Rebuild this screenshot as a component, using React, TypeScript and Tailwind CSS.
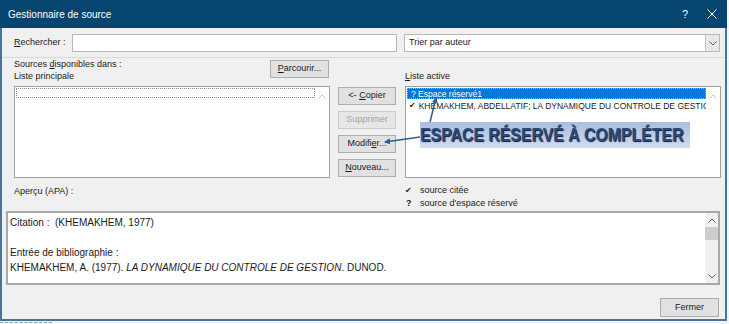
import React from 'react';

const ChevUp = ({ color = '#b0b0b0' }: { color?: string }) => (
  <svg width="8" height="5" viewBox="0 0 8 5"><path d="M0.5 4.5 L4 1 L7.5 4.5" fill="none" stroke={color} strokeWidth="1" /></svg>
);

const ChevDown = ({ color = '#606060' }: { color?: string }) => (
  <svg width="8" height="5" viewBox="0 0 8 5"><path d="M0.5 0.5 L4 4 L7.5 0.5" fill="none" stroke={color} strokeWidth="1" /></svg>
);

const Btn = ({ children, disabled = false, className = '' }: { children: React.ReactNode; disabled?: boolean; className?: string }) => (
  <div
    className={`h-[18px] flex items-center justify-center border text-[9px] ${
      disabled ? 'bg-[#e6e6e6] border-[#cccccc] text-[#a3a3a3]' : 'bg-[#e1e1e1] border-[#adadad] text-[#1a1a1a]'
    } ${className}`}
  >
    {children}
  </div>
);

const App = () => {
  return (
    <div className="relative w-[729px] h-[324px] bg-[#f6f5ee] overflow-hidden font-['Liberation_Sans',Arial,sans-serif] text-[#1a1a1a]">
      <div className="w-[727px] h-[321px] flex flex-col">
        {/* title bar */}
        <div className="h-[28px] bg-[#05456f] flex items-center pl-[8px] text-white">
          <span className="text-[10px]">Gestionnaire de source</span>
          <span className="ml-auto text-[11px] mr-[19px]">?</span>
          <svg width="10" height="10" viewBox="0 0 10 10" className="mr-[10px]">
            <path d="M0.5 0.5 L9.5 9.5 M9.5 0.5 L0.5 9.5" stroke="white" strokeWidth="1" />
          </svg>
        </div>

        <div className="flex-1 flex flex-col bg-[#f0f0f0] border-x-2 border-b-2 border-[#46759f]">
          {/* search row */}
          <div className="mt-[6px] h-[18px] flex items-center pl-[12px]">
            <span className="w-[58px] text-[9px]"><u>R</u>echercher :</span>
            <div className="w-[325px] h-[18px] bg-white border border-[#b9b9b9]" />
            <div className="ml-[7px] w-[316px] h-[18px] bg-white border border-[#b9b9b9] flex items-center">
              <span className="pl-[4px] text-[9px]">Trier par auteur</span>
              <div className="ml-auto w-[14px] h-[16px] bg-[#e8e8e8] border-l border-[#c4c4c4] flex items-center justify-center">
                <ChevDown />
              </div>
            </div>
          </div>

          <div className="mt-[5px] h-px bg-[#dadada]" />

          {/* lists */}
          <div className="flex pl-[12px]">
            <div className="w-[316px] flex flex-col">
              <div className="h-[28px] flex justify-between">
                <div className="text-[9px] leading-[12px]">
                  <div>Sources <u>d</u>isponibles dans :</div>
                  <div>Liste principale</div>
                </div>
                <Btn className="mt-[2px] mr-px w-[59px]"><span><u>P</u>arcourir...</span></Btn>
              </div>
              <div className="h-[92px] bg-white border border-[#a0a0a0] flex">
                <div className="flex-1 pl-px pt-px">
                  <div className="h-[10px] border border-dotted border-[#8a8a8a]" />
                </div>
                <div className="w-[14px] flex justify-center pt-[7px]">
                  <ChevUp color="#c8c8c8" />
                </div>
              </div>
            </div>

            <div className="ml-[8px] w-[58px] pt-[29px] flex flex-col gap-[6px]">
              <Btn><span>&lt;- <u>C</u>opier</span></Btn>
              <Btn disabled>Supprimer</Btn>
              <Btn><span>Modifi<u>e</u>r...</span></Btn>
              <Btn><span><u>N</u>ouveau...</span></Btn>
            </div>

            <div className="ml-[9px] w-[316px] flex flex-col">
              <div className="h-[28px] pt-[12px] text-[9px] leading-[12px]"><u>L</u>iste active</div>
              <div className="h-[92px] bg-white border border-[#a0a0a0] flex">
                <div className="flex-1 pl-px pt-px overflow-hidden text-[8.5px] leading-[10px]">
                  <div className="h-[11px] bg-[#0078d7] text-white pl-[3px] whitespace-nowrap border border-dotted border-[#d9a36a]">? Espace réservé1</div>
                  <div className="h-[13px] flex items-center pl-[2px] whitespace-nowrap">
                    <span className="mr-[3px] font-['DejaVu_Sans',sans-serif] text-[8px]">✔</span>
                    KHEMAKHEM, ABDELLATIF; LA DYNAMIQUE DU CONTROLE DE GESTION
                  </div>
                </div>
                <div className="w-[14px] flex justify-center pt-[7px]">
                  <ChevUp color="#c8c8c8" />
                </div>
              </div>
            </div>
          </div>

          {/* legend row */}
          <div className="h-[33px] flex pl-[12px] text-[9px]">
            <div className="w-[391px] pt-[7px] leading-[12px]">Aperçu (APA) :</div>
            <div className="pt-[6px] leading-[13px]">
              <div className="flex">
                <span className="w-[15px] font-['DejaVu_Sans',sans-serif] text-[8px]">✔</span>
                <span>source citée</span>
              </div>
              <div className="flex">
                <span className="w-[15px] font-bold pl-px">?</span>
                <span>source d'espace réservé</span>
              </div>
            </div>
          </div>

          {/* preview */}
          <div className="ml-[4px] w-[714px] h-[74px] bg-white border-2 border-[#a9a9a9] flex">
            <div className="flex-1 pl-[2px] pt-[2px] text-[10px] leading-[15px]">
              <div>Citation :&nbsp; (KHEMAKHEM, 1977)</div>
              <div>&nbsp;</div>
              <div>Entrée de bibliographie :</div>
              <div>
                KHEMAKHEM, A. (1977). <i>LA DYNAMIQUE DU CONTROLE DE GESTION</i>. DUNOD.
              </div>
            </div>
            <div className="w-[13px] bg-[#f0f0f0] flex flex-col items-center">
              <div className="pt-[5px]"><ChevUp color="#606060" /></div>
              <div className="mt-[4px] w-[13px] h-[13px] bg-[#cdcdcd]" />
              <div className="mt-auto pb-[4px]"><ChevDown /></div>
            </div>
          </div>

          <div className="mt-[13px] self-end mr-[6px]">
            <Btn className="w-[59px] h-[19px]">Fermer</Btn>
          </div>
        </div>
      </div>

      {/* bottom strip */}
      <div className="ml-0 mt-px w-[52px] border-t border-dashed border-[#9a9a9a]" />

      {/* annotation overlay */}
      <div className="absolute left-[420px] top-[122px] w-[270px] h-[26px] bg-linear-to-b from-[#a8bee3] to-[#d0dcf0] flex items-center">
        <span className="block origin-left scale-x-[0.88] whitespace-nowrap text-[18px] font-bold leading-none text-[#2b4b7b] [text-shadow:1px_1px_1px_#0c1d38]">
          ESPACE RÉSERVÉ À COMPLÉTER
        </span>
      </div>
      <svg className="absolute left-0 top-0 pointer-events-none" width="729" height="324">
        <defs>
          <marker id="ah" markerWidth="6" markerHeight="6" refX="5" refY="3" orient="auto" markerUnits="userSpaceOnUse">
            <path d="M0 0 L6 3 L0 6 z" fill="#2e5f93" />
          </marker>
        </defs>
        <line x1="420" y1="137" x2="385" y2="142" stroke="#2e5f93" strokeWidth="1.5" markerEnd="url(#ah)" />
        <line x1="430" y1="122" x2="436" y2="98" stroke="#2e5f93" strokeWidth="1.5" markerEnd="url(#ah)" />
      </svg>
    </div>
  );
};

export default App;
